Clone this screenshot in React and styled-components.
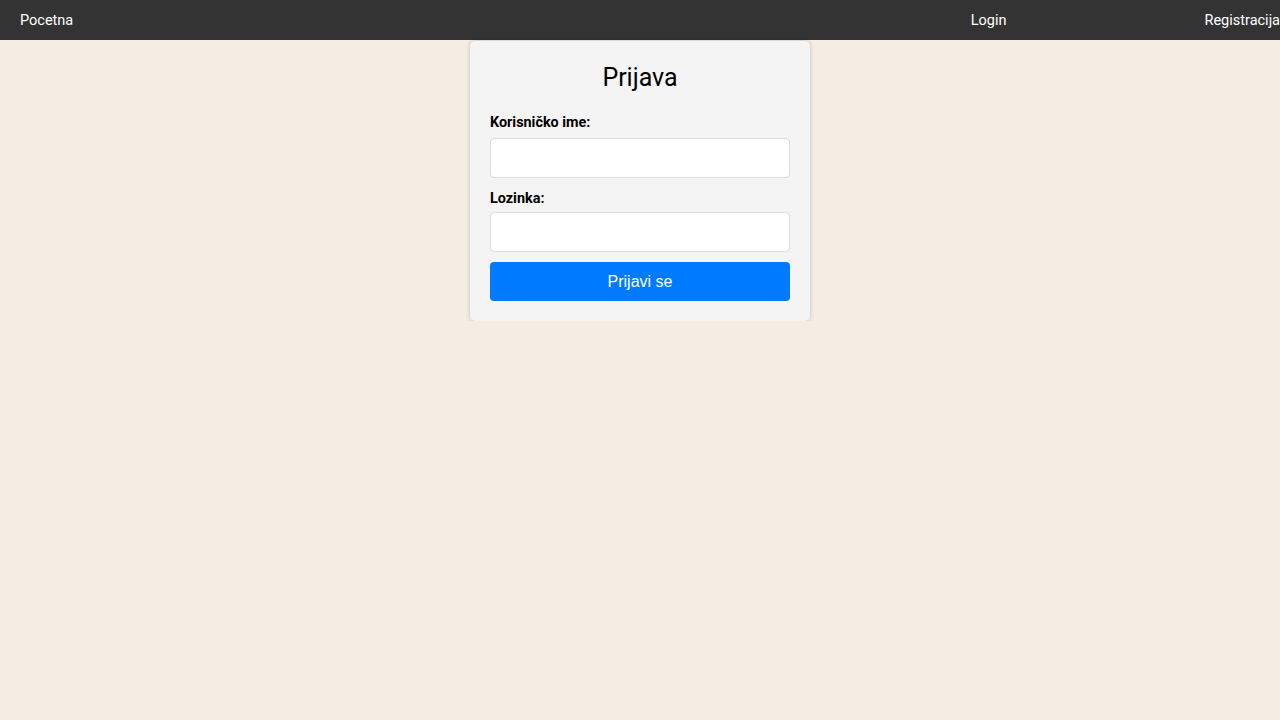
import React from "react";
import styled, { createGlobalStyle } from "styled-components";

const Global = createGlobalStyle`
  html, body { margin: 0; padding: 0; }
  body {
    background: #f5ece3;
    font-family: Roboto, "Liberation Sans", Arial, sans-serif;
    overflow: hidden;
  }
  * { box-sizing: border-box; }
`;

const NavBar = styled.nav`
  height: 40px;
  background: #333333;
  display: flex;
  align-items: center;
`;

const NavLink = styled.a`
  color: #ffffff;
  font-size: 14.5px;
  text-decoration: none;
  padding-left: ${(p) => p.$pl || 0}px;
  margin-left: ${(p) => p.$ml || "0"};
  white-space: nowrap;
`;

const Main = styled.main`
  display: flex;
  justify-content: center;
  padding-top: 1px;
`;

const Card = styled.form`
  width: 340px;
  background: #f4f4f4;
  border-radius: 5px;
  box-shadow: 0 0 4px rgba(0, 0, 0, 0.2);
  padding: 20px;
  display: flex;
  flex-direction: column;
`;

const Title = styled.h2`
  margin: 0 0 20px;
  font-size: 25px;
  font-weight: 400;
  line-height: 34px;
  text-align: center;
  color: #000;
`;

const Label = styled.label`
  font-size: 14.4px;
  font-weight: 700;
  line-height: 16px;
  color: #000;
  margin-bottom: ${(p) => p.$mb}px;
`;

const Input = styled.input`
  height: 40px;
  width: 100%;
  border: 1px solid #dddddd;
  border-radius: 4px;
  background: #fff;
  margin-bottom: ${(p) => p.$mb}px;
  font-size: 14px;
  padding: 0 10px;
`;

const Button = styled.button`
  height: 39px;
  width: 100%;
  border: none;
  border-radius: 4px;
  background: #007bff;
  color: #fff;
  font-family: "Liberation Sans", Arial, sans-serif;
  font-size: 16px;
  cursor: pointer;
`;

export default function App() {
  return (
    <>
      <Global />
      <NavBar>
        <NavLink href="#" $pl={20}>Pocetna</NavLink>
        <NavLink href="#" $ml="auto">Login</NavLink>
        <NavLink href="#" $ml="198px">Registracija</NavLink>
      </NavBar>
      <Main>
        <Card onSubmit={(e) => e.preventDefault()}>
          <Title>Prijava</Title>
          <Label htmlFor="user" $mb={7}>Korisničko ime:</Label>
          <Input id="user" type="text" $mb={13} />
          <Label htmlFor="pass" $mb={5}>Lozinka:</Label>
          <Input id="pass" type="password" $mb={10} />
          <Button type="submit">Prijavi se</Button>
        </Card>
      </Main>
    </>
  );
}
